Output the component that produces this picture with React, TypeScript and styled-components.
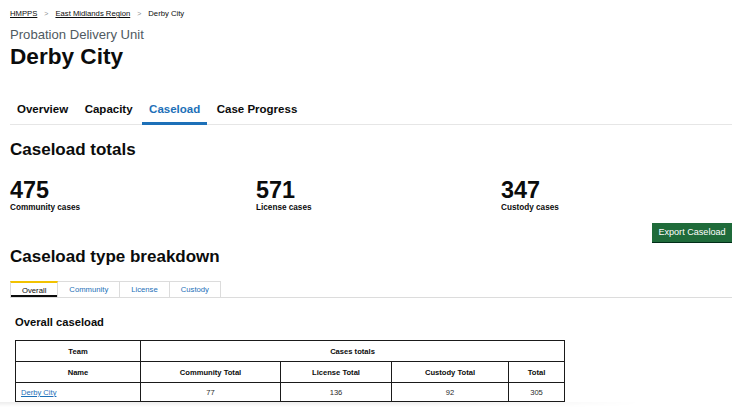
import React from "react";
import styled, { createGlobalStyle } from "styled-components";

const Global = createGlobalStyle`
  html, body { margin: 0; padding: 0; background: #fff; }
  body { font-family: "Liberation Sans", Arial, sans-serif; color: #0b0c0c; }
  * { box-sizing: border-box; }
`;

const Viewport = styled.div`
  height: 402px;
  overflow: hidden;
`;

const Page = styled.div`
  width: 732px;
  padding-left: 10px;
`;

const Fade = styled.div`
  height: 16px;
  background: linear-gradient(to bottom, rgba(0, 0, 0, 0.07), rgba(0, 0, 0, 0) 5px);
  -webkit-mask-image: linear-gradient(to right, #000 55%, transparent 85%);
  mask-image: linear-gradient(to right, #000 55%, transparent 85%);
`;

const Breadcrumbs = styled.nav`
  display: flex;
  align-items: center;
  gap: 7px;
  margin-top: 8px;
  font-size: 7.7px;
  line-height: 12px;
`;

const Crumb = styled.a`
  color: #0b0c0c;
  text-decoration: underline;
`;

const Sep = styled.span`
  color: #8a8f92;
  font-size: 7px;
`;

const Caption = styled.div`
  margin-top: 7px;
  font-size: 13.1px;
  line-height: 16px;
  color: #505a5f;
`;

const Title = styled.h1`
  margin: 1px 0 0;
  font-size: 22.6px;
  line-height: 26px;
  font-weight: 700;
`;

const Nav = styled.ul`
  list-style: none;
  display: flex;
  gap: 2.5px;
  margin: 32px 0 0;
  padding: 0;
  border-bottom: 1px solid #e6e6e6;
`;

const NavItem = styled.li<{ $active?: boolean }>`
  padding: 0 7px 6px;
  margin-bottom: -1px;
  font-size: 11.5px;
  line-height: 14px;
  font-weight: 700;
  color: ${(p) => (p.$active ? "#1d70b8" : "#0b0c0c")};
  border-bottom: 3px solid ${(p) => (p.$active ? "#1d70b8" : "transparent")};
`;

const H2 = styled.h2<{ $mt: number }>`
  margin: ${(p) => p.$mt}px 0 0;
  font-size: 17px;
  line-height: 20px;
  font-weight: 700;
`;

const Stats = styled.div`
  display: grid;
  grid-template-columns: 246px 245px 231px;
  margin-top: 18px;
`;

const Stat = styled.div`
  display: flex;
  flex-direction: column;
`;

const StatNumber = styled.div`
  font-size: 23.4px;
  line-height: 24px;
  font-weight: 700;
`;

const StatLabel = styled.div`
  margin-top: 1px;
  font-size: 8.2px;
  line-height: 10px;
  font-weight: 700;
`;

const ButtonRow = styled.div`
  display: flex;
  justify-content: flex-end;
  margin-top: 10px;
`;

const Button = styled.button`
  height: 19px;
  width: 80px;
  padding: 0;
  border: 0;
  background: #1f6b3a;
  box-shadow: 0 1px 0 #002d18;
  color: #fff;
  font-family: "Liberation Sans", Arial, sans-serif;
  font-size: 9.1px;
  line-height: 19px;
`;

const SubTabs = styled.div`
  display: flex;
  margin-top: 14px;
  border-bottom: 1px solid #dcdcdc;
`;

const SubTab = styled.div<{ $active?: boolean }>`
  height: 16px;
  padding: 0 11px;
  display: flex;
  align-items: center;
  font-size: 7.7px;
  color: ${(p) => (p.$active ? "#0b0c0c" : "#1d70b8")};
  border: 1px solid #dcdcdc;
  border-bottom: 0;
  border-left-width: ${(p) => (p.$active ? "1px" : "0")};
  border-top: ${(p) => (p.$active ? "2px solid #f2c200" : "1px solid #dcdcdc")};
  box-shadow: ${(p) => (p.$active ? "inset 0 -2px 0 #0b0c0c" : "none")};
`;

const Panel = styled.div`
  padding-left: 5px;
`;

const H3 = styled.h3`
  margin: 17px 0 0;
  font-size: 11.2px;
  line-height: 14px;
  font-weight: 700;
`;

const Table = styled.table`
  margin-top: 11px;
  border-collapse: collapse;
  table-layout: fixed;
  width: 549px;
  font-size: 7.6px;
`;

const Th = styled.th`
  height: 21px;
  border: 1.5px solid #1a1a1a;
  font-weight: 700;
  text-align: center;
  padding: 0 5px;
`;

const Td = styled.td<{ $left?: boolean }>`
  height: 19px;
  border: 1.5px solid #1a1a1a;
  text-align: ${(p) => (p.$left ? "left" : "center")};
  padding: 0 5px;
  color: #2a2a2a;
`;

const TeamLink = styled.a`
  color: #1d70b8;
  text-decoration: underline;
`;

const rows = [
  { team: "Derby City", community: 77, license: 136, custody: 92, total: 305 },
];

export default function App() {
  return (
    <>
      <Global />
      <Viewport>
        <Page>
          <Breadcrumbs>
            <Crumb>HMPPS</Crumb>
            <Sep>&gt;</Sep>
            <Crumb>East Midlands Region</Crumb>
            <Sep>&gt;</Sep>
            <span>Derby City</span>
          </Breadcrumbs>
          <Caption>Probation Delivery Unit</Caption>
          <Title>Derby City</Title>
          <Nav>
            <NavItem>Overview</NavItem>
            <NavItem>Capacity</NavItem>
            <NavItem $active>Caseload</NavItem>
            <NavItem>Case Progress</NavItem>
          </Nav>
          <H2 $mt={15}>Caseload totals</H2>
          <Stats>
            <Stat>
              <StatNumber>475</StatNumber>
              <StatLabel>Community cases</StatLabel>
            </Stat>
            <Stat>
              <StatNumber>571</StatNumber>
              <StatLabel>License cases</StatLabel>
            </Stat>
            <Stat>
              <StatNumber>347</StatNumber>
              <StatLabel>Custody cases</StatLabel>
            </Stat>
          </Stats>
          <ButtonRow>
            <Button>Export Caseload</Button>
          </ButtonRow>
          <H2 $mt={5}>Caseload type breakdown</H2>
          <SubTabs>
            <SubTab $active>Overall</SubTab>
            <SubTab>Community</SubTab>
            <SubTab>License</SubTab>
            <SubTab>Custody</SubTab>
          </SubTabs>
          <Panel>
            <H3>Overall caseload</H3>
            <Table>
              <colgroup>
                <col style={{ width: 125 }} />
                <col style={{ width: 140 }} />
                <col style={{ width: 111 }} />
                <col style={{ width: 117 }} />
                <col style={{ width: 56 }} />
              </colgroup>
              <thead>
                <tr>
                  <Th>Team</Th>
                  <Th colSpan={4}>Cases totals</Th>
                </tr>
                <tr>
                  <Th>Name</Th>
                  <Th>Community Total</Th>
                  <Th>License Total</Th>
                  <Th>Custody Total</Th>
                  <Th>Total</Th>
                </tr>
              </thead>
              <tbody>
                {rows.map((r) => (
                  <tr key={r.team}>
                    <Td $left>
                      <TeamLink>{r.team}</TeamLink>
                    </Td>
                    <Td>{r.community}</Td>
                    <Td>{r.license}</Td>
                    <Td>{r.custody}</Td>
                    <Td>{r.total}</Td>
                  </tr>
                ))}
                <tr>
                  <Td />
                  <Td />
                  <Td />
                  <Td />
                  <Td />
                </tr>
              </tbody>
            </Table>
          </Panel>
        </Page>
      </Viewport>
      <Fade />
    </>
  );
}
